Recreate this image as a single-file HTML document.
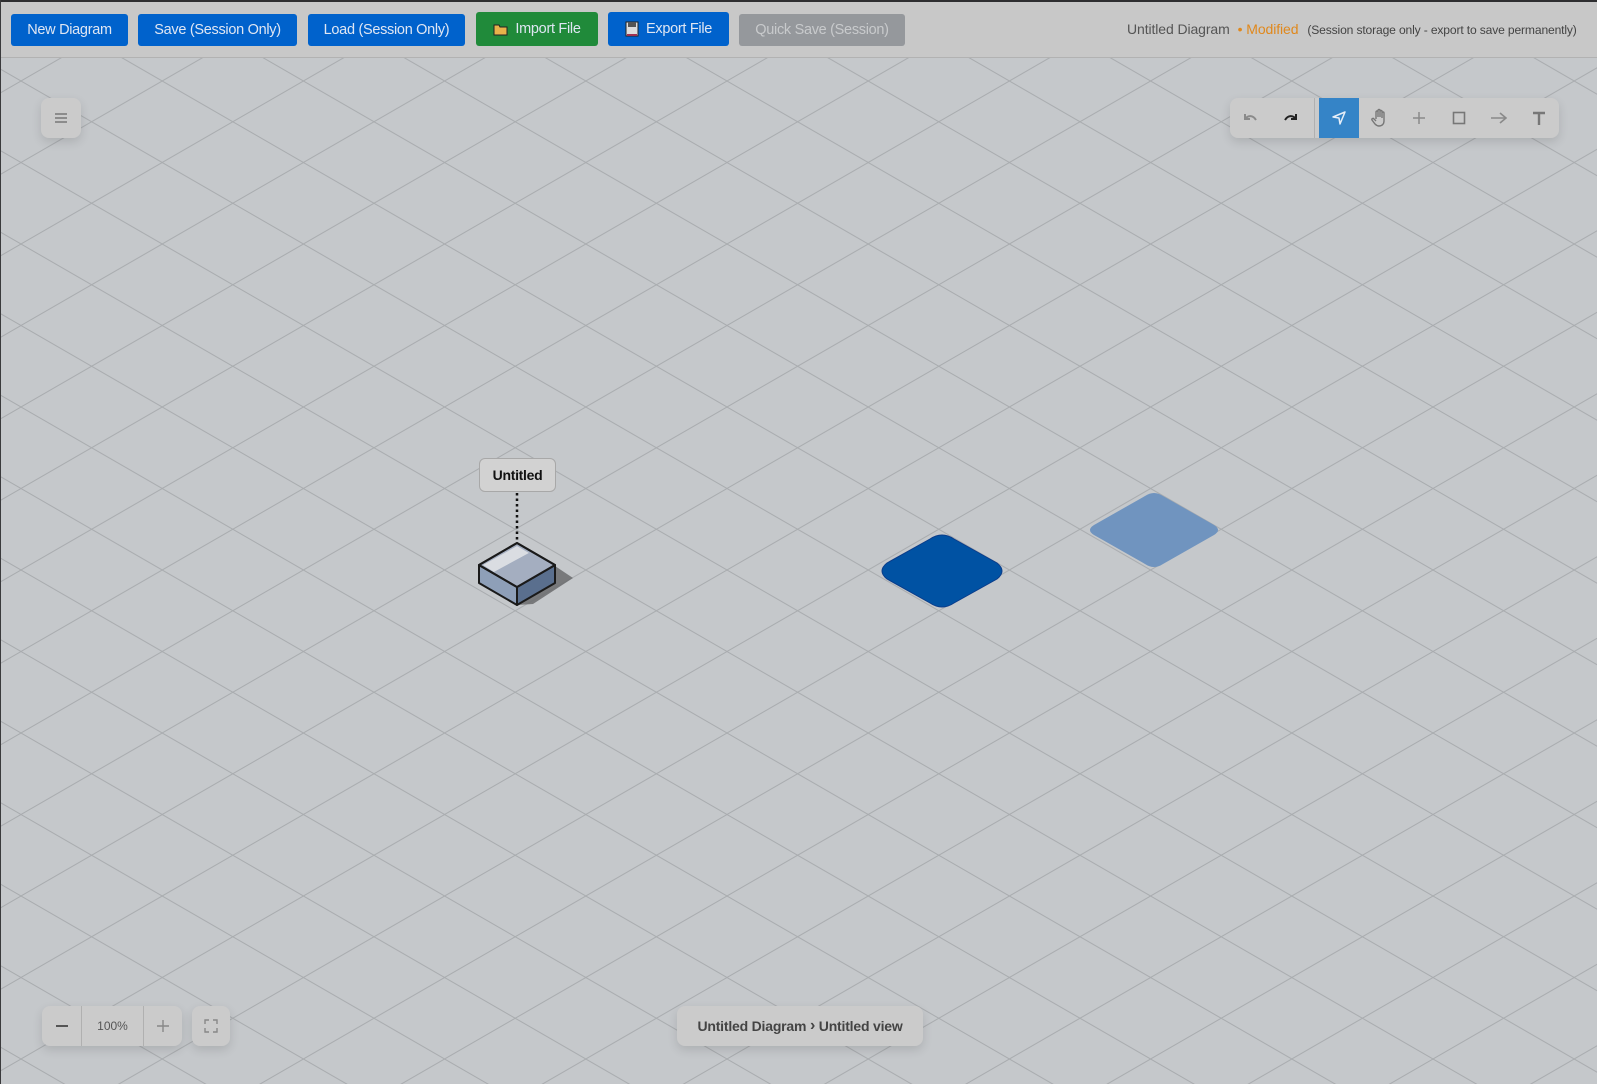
<!DOCTYPE html>
<html><head><meta charset="utf-8">
<style>
*{box-sizing:border-box;margin:0;padding:0}
html,body{width:1597px;height:1084px;overflow:hidden;background:#c5c8cb;font-family:"Liberation Sans",sans-serif}
#top{position:absolute;left:0;top:0;width:1597px;height:2px;background:#2e2e30;z-index:5}
#left{position:absolute;left:0;top:0;width:1px;height:1084px;background:#3a3a3c;z-index:5}
#hdr{position:absolute;left:0;top:0;width:1597px;height:58px;background:#c8c8c8;border-bottom:1px solid #b2b2b2;z-index:3}
.b{position:absolute;top:14px;height:32px;border-radius:3px;color:#dfe6f3;font-size:14.5px;display:flex;align-items:center;justify-content:center;background:#0062cc;letter-spacing:-0.3px}
.g{background:#208a3a;top:12px;height:34px}
.gray{background:#95989c;color:#c8cacc}
#info{position:absolute;top:21px;left:1127px;font-size:14px;color:#555;white-space:nowrap;letter-spacing:-0.1px}
#info .m{color:#e0881c;margin-left:8px}
#info .s{font-size:12.1px;color:#444;margin-left:9px;letter-spacing:-0.15px}
svg#grid{position:absolute;left:0;top:0}
.panel{position:absolute;background:#cbcbcb;border-radius:8px;box-shadow:0 4px 10px rgba(0,0,0,.12)}
.tool{position:absolute;top:0;width:40px;height:40px;display:flex;align-items:center;justify-content:center}
</style></head><body>
<div id="top"></div><div id="left"></div>
<svg id="grid" width="1597" height="1084">
<defs>
<pattern id="p" width="141.2" height="81.5" patternUnits="userSpaceOnUse" x="21" y="81">
<path d="M0 0L141.2 81.5M0 81.5L141.2 0" stroke="#a9acaf" stroke-width="1" fill="none"/>
</pattern>
</defs>
<rect width="1597" height="1084" fill="url(#p)"/>
<polygon points="555,566 573,578 533,604 517,605 555,583" fill="#6a6b6d" opacity=".85"/>
<polygon points="479,565 517,587 517,605 479,583" fill="#8e9fb8" stroke="#1a1a1a" stroke-width="2" stroke-linejoin="round"/>
<polygon points="555,565 517,587 517,605 555,583" fill="#5a6f8e" stroke="#1a1a1a" stroke-width="2" stroke-linejoin="round"/>
<polygon points="517,543 555,565 517,587 479,565" fill="#a4aec0" stroke="#1a1a1a" stroke-width="2" stroke-linejoin="round"/>
<path d="M483,565 L517,546 L529,553 L494,572 Z" fill="#dadde2"/>
<path d="M494,572 L529,553 L553,566 L517,586 Z" fill="#a4aec0"/>
<polygon points="517,543 555,565 517,587 479,565" fill="none" stroke="#1a1a1a" stroke-width="2" stroke-linejoin="round"/>
<line x1="517" y1="493" x2="517" y2="542" stroke="#111" stroke-width="2.5" stroke-dasharray="2.5 3"/>
<path d="M930,539 Q942,531 954,539 L997,563 Q1007,571 997,579 L954,603 Q942,611 930,603 L887,579 Q877,571 887,563 Z" fill="#0052a3" stroke="#0a3c8a" stroke-width="1"/>
<path d="M1145,496 Q1154,490 1163,496 L1214,525 Q1222,530 1214,535 L1163,564 Q1154,570 1145,564 L1094,535 Q1086,530 1094,525 Z" fill="#7094bf"/>
</svg>
<div style="position:absolute;left:479px;top:458px;width:77px;height:34px;background:#d2d2d2;border:1px solid #a8a8a8;border-radius:6px;font-size:14px;font-weight:bold;color:#111;display:flex;align-items:center;justify-content:center;letter-spacing:-0.3px">Untitled</div>

<div id="hdr">
<div class="b" style="left:11px;width:117px">New Diagram</div>
<div class="b" style="left:138px;width:159px">Save (Session Only)</div>
<div class="b" style="left:308px;width:157px">Load (Session Only)</div>
<div class="b g" style="left:476px;width:122px"><svg width="16" height="14" style="margin-right:6px"><path d="M1 3h5l1 2h7v8H1z" fill="#e8b24a" stroke="#222" stroke-width="1"/></svg>Import File</div>
<div class="b" style="left:608px;width:121px;top:12px;height:34px"><svg width="14" height="16" style="margin-right:7px"><rect x="1" y="1" width="12" height="14" fill="#ddd" stroke="#222"/><rect x="3" y="1" width="8" height="5" fill="#555"/><rect x="2" y="13" width="10" height="2" fill="#a03050"/></svg>Export File</div>
<div class="b gray" style="left:739px;width:166px">Quick Save (Session)</div>
<div id="info">Untitled Diagram<span class="m">• Modified</span><span class="s">(Session storage only - export to save permanently)</span></div>
</div>

<div class="panel" style="left:41px;top:98px;width:40px;height:40px;display:flex;align-items:center;justify-content:center">
<svg width="14" height="12"><path d="M1 2h12M1 6h12M1 10h12" stroke="#777" stroke-width="1.6"/></svg></div>

<div class="panel" style="left:1230px;top:98px;width:329px;height:40px">
<div class="tool" style="left:0"><svg width="18" height="14"><path d="M4 3v5h5M4 8c3-4 8-4 11 1" fill="none" stroke="#8a8a8a" stroke-width="2"/></svg></div>
<div class="tool" style="left:41px"><svg width="18" height="14"><path d="M14 3v5H9M14 8C11 4 6 4 3 9" fill="none" stroke="#222" stroke-width="2"/></svg></div>
<div style="position:absolute;left:84px;top:0;width:1px;height:40px;background:#b0b0b0"></div>
<div class="tool" style="left:89px;background:#3584c7"><svg width="16" height="16"><path d="M14 2L2 7l6 1 1 6z" fill="none" stroke="#e6eef8" stroke-width="1.5" stroke-linejoin="round"/></svg></div>
<div class="tool" style="left:129px"><svg width="18" height="20"><path d="M6 11V4a1 1 0 012 0v5V2.5a1 1 0 012 0V9V3.5a1 1 0 012 0V10V5a1 1 0 012 0v8c0 3-2 5-5 5H9c-2 0-3-1-4-2l-3-4a1 1 0 012-1l2 2" fill="none" stroke="#777" stroke-width="1.4"/></svg></div>
<div class="tool" style="left:169px"><svg width="14" height="14"><path d="M7 1v12M1 7h12" stroke="#8a8a8a" stroke-width="1.5"/></svg></div>
<div class="tool" style="left:209px"><svg width="14" height="14"><rect x="1.5" y="1.5" width="11" height="11" fill="none" stroke="#777" stroke-width="1.6"/></svg></div>
<div class="tool" style="left:249px"><svg width="18" height="14"><path d="M1 7h15M10 2l6 5-6 5" fill="none" stroke="#8a8a8a" stroke-width="1.6"/></svg></div>
<div class="tool" style="left:289px"><svg width="14" height="14"><path d="M1 2h12M7 2v12" stroke="#777" stroke-width="2.4"/></svg></div>
</div>

<div class="panel" style="left:42px;top:1006px;width:140px;height:40px;font-size:12px;color:#555">
<div style="position:absolute;left:0;top:0;width:39px;height:40px;display:flex;align-items:center;justify-content:center"><svg width="12" height="4"><path d="M0 2h12" stroke="#555" stroke-width="2"/></svg></div>
<div style="position:absolute;left:39px;top:0;width:1px;height:40px;background:#b0b0b0"></div>
<div style="position:absolute;left:40px;top:0;width:61px;height:40px;display:flex;align-items:center;justify-content:center">100%</div>
<div style="position:absolute;left:101px;top:0;width:1px;height:40px;background:#b0b0b0"></div>
<div style="position:absolute;left:102px;top:0;width:38px;height:40px;display:flex;align-items:center;justify-content:center"><svg width="14" height="14"><path d="M7 1v12M1 7h12" stroke="#888" stroke-width="1.4"/></svg></div>
</div>
<div class="panel" style="left:192px;top:1006px;width:38px;height:40px;display:flex;align-items:center;justify-content:center">
<svg width="14" height="14"><path d="M1 5V1h4M9 1h4v4M13 9v4H9M5 13H1V9" fill="none" stroke="#888" stroke-width="1.4"/></svg></div>

<div class="panel" style="left:677px;top:1006px;width:246px;height:40px;display:flex;align-items:center;justify-content:center;font-size:14px;font-weight:bold;color:#444;letter-spacing:-0.2px">Untitled Diagram&nbsp;<span style="font-size:16px">›</span>&nbsp;Untitled view</div>
</body></html>
